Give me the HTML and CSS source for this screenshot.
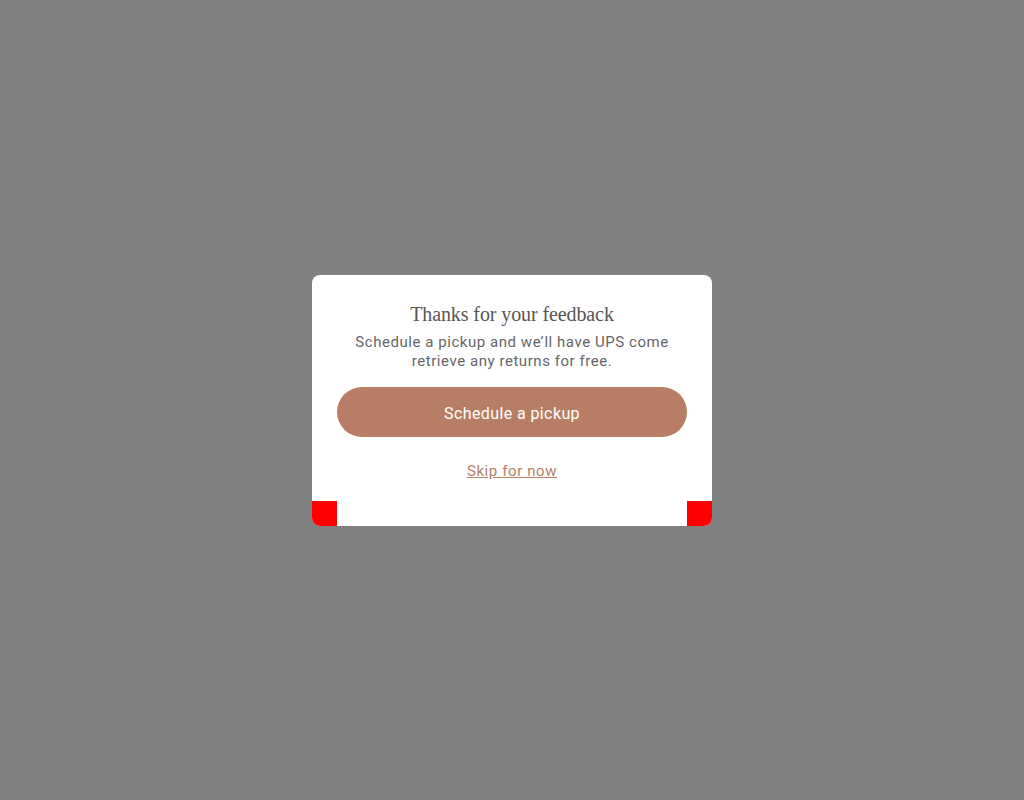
FILE: index.html
```html
<!DOCTYPE html>
<html lang="en">
<head>
<meta charset="utf-8">
<title>Thanks for your feedback</title>
<link rel="stylesheet" href="styles.css">
</head>
<body>
<div class="overlay">
  <div class="modal">
    <h2 class="title">Thanks for your feedback</h2>
    <p class="text">Schedule a pickup and we’ll have UPS come retrieve any returns for free.</p>
    <button class="primary">Schedule a pickup</button>
    <a class="skip" href="#">Skip for now</a>
    <span class="corner corner-left"></span>
    <span class="corner corner-right"></span>
  </div>
</div>
</body>
</html>
```
FILE: styles.css
```css
html, body {
  margin: 0;
  padding: 0;
  height: 100%;
}
body {
  background: #808080;
  font-family: "Roboto", "Liberation Sans", sans-serif;
}
.overlay {
  height: 100%;
  display: flex;
  align-items: center;
  justify-content: center;
}
.modal {
  position: relative;
  box-sizing: border-box;
  width: 400px;
  height: 251px;
  background: #fff;
  border-radius: 8px;
  overflow: hidden;
  padding: 25px 25px 0;
  display: flex;
  flex-direction: column;
  align-items: center;
  text-align: center;
}
.title {
  margin: 0;
  font-family: "Liberation Serif", serif;
  font-weight: normal;
  font-size: 20px;
  line-height: 26px;
  letter-spacing: -0.1px;
  color: #555;
  padding-top: 1px;
}
.text {
  margin: 6px 0 0;
  font-size: 15px;
  line-height: 19.5px;
  letter-spacing: 0.55px;
  color: #666;
  width: 350px;
}
.primary {
  margin-top: 15px;
  width: 350px;
  height: 50px;
  padding: 4px 0 0;
  border: none;
  border-radius: 25px;
  background: #b77e65;
  color: #fff;
  font-family: inherit;
  font-size: 16px;
  letter-spacing: 0.4px;
}
.skip {
  margin-top: 24px;
  font-size: 15px;
  line-height: 20px;
  letter-spacing: 0.6px;
  color: #b77e65;
  text-decoration: underline;
}
.corner {
  position: absolute;
  bottom: 0;
  width: 25px;
  height: 25px;
  background: #ff0000;
}
.corner-left { left: 0; }
.corner-right { right: 0; }
```
